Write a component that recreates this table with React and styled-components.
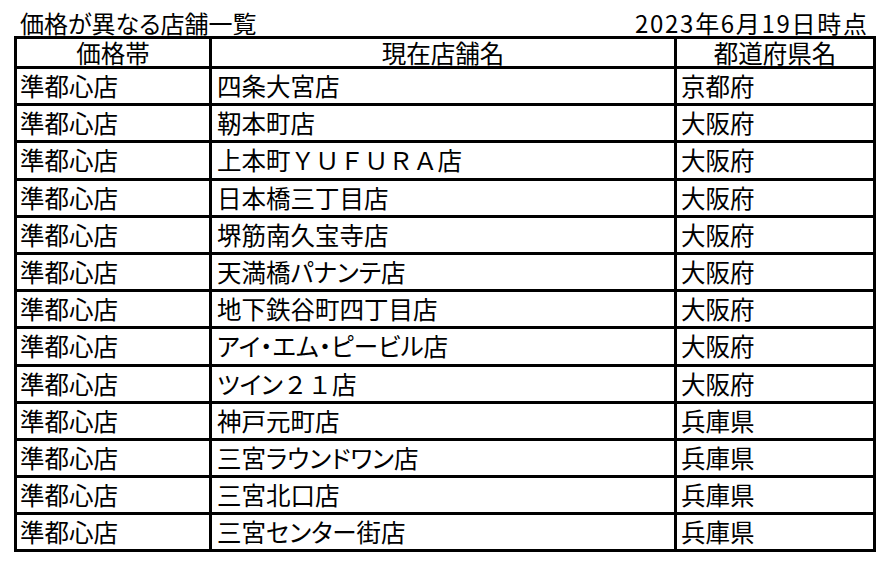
import React from "react";
import styled, { createGlobalStyle } from "styled-components";

const GlobalStyle = createGlobalStyle`
  html, body {
    margin: 0;
    padding: 0;
    background: #ffffff;
  }
  body {
    font-family: "Noto Sans CJK JP", "Noto Sans", sans-serif;
    color: #000000;
    font-feature-settings: "palt";
  }
`;

// full-width latin / digits keep their full em width
const Wide = styled.span`
  font-feature-settings: normal;
`;

const rows = [
  ["準都心店", "四条大宮店", "京都府"],
  ["準都心店", "靭本町店", "大阪府"],
  ["準都心店", <>上本町<Wide>ＹＵＦＵＲＡ</Wide>店</>, "大阪府"],
  ["準都心店", "日本橋三丁目店", "大阪府"],
  ["準都心店", "堺筋南久宝寺店", "大阪府"],
  ["準都心店", "天満橋パナンテ店", "大阪府"],
  ["準都心店", "地下鉄谷町四丁目店", "大阪府"],
  ["準都心店", "アイ・エム・ピービル店", "大阪府"],
  ["準都心店", <>ツイン<Wide>２１</Wide>店</>, "大阪府"],
  ["準都心店", "神戸元町店", "兵庫県"],
  ["準都心店", "三宮ラウンドワン店", "兵庫県"],
  ["準都心店", "三宮北口店", "兵庫県"],
  ["準都心店", "三宮センター街店", "兵庫県"],
];

const Page = styled.div`
  padding: 4px 0 0 14px;
  width: 860px;
`;

const TitleBar = styled.div`
  display: flex;
  justify-content: space-between;
  align-items: flex-end;
  height: 32px;
  padding: 0 7px 0 6px;
  font-size: 24px;
  line-height: 26px;
`;

const DateText = styled.span`
  letter-spacing: 1.7px;
  margin-right: -1.7px;
`;

const Sheet = styled.table`
  border-collapse: collapse;
  table-layout: fixed;
  width: 859px;
  font-size: 24.5px;
`;

const Head = styled.th`
  border: 3px solid #000;
  height: 27px;
  padding: 0;
  font-weight: normal;
  text-align: center;
  line-height: 26px;
`;

const Cell = styled.td`
  border: 3px solid #000;
  height: 34.2px;
  padding: 0 0 0 ${(p) => p.$pad}px;
  line-height: 34px;
  white-space: nowrap;
  overflow: hidden;
`;

export default function App() {
  return (
    <>
      <GlobalStyle />
      <Page>
        <TitleBar>
          <span>価格が異なる店舗一覧</span>
          <DateText>2023年6月19日時点</DateText>
        </TitleBar>
        <Sheet>
          <colgroup>
            <col style={{ width: 195 }} />
            <col style={{ width: 465 }} />
            <col style={{ width: 199 }} />
          </colgroup>
          <thead>
            <tr>
              <Head>価格帯</Head>
              <Head>現在店舗名</Head>
              <Head>都道府県名</Head>
            </tr>
          </thead>
          <tbody>
            {rows.map((r, i) => (
              <tr key={i}>
                <Cell $pad={3}>{r[0]}</Cell>
                <Cell $pad={5}>{r[1]}</Cell>
                <Cell $pad={4}>{r[2]}</Cell>
              </tr>
            ))}
          </tbody>
        </Sheet>
      </Page>
    </>
  );
}
